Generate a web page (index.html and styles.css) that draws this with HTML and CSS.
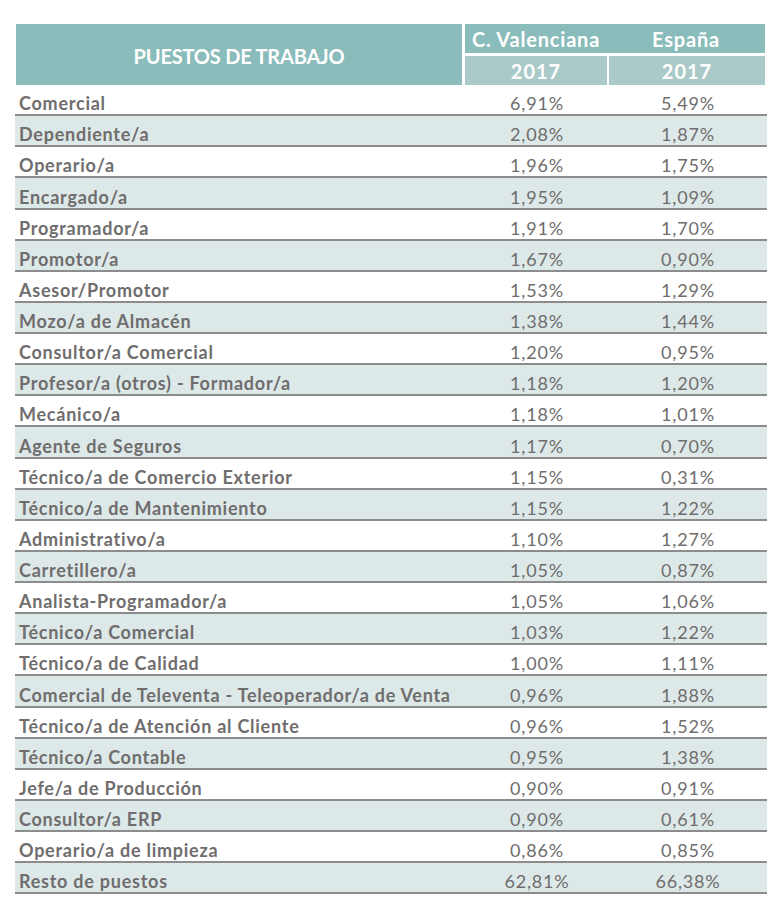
FILE: index.html
```html
<!DOCTYPE html>
<html lang="es">
<head>
<meta charset="utf-8">
<title>Puestos de trabajo</title>
<link rel="stylesheet" href="styles.css">
</head>
<body>
<div class="table">
  <div class="head">
    <div class="head-label">PUESTOS DE TRABAJO</div>
    <div class="head-right">
      <div class="head-top">
        <div class="col-a">C. Valenciana</div>
        <div class="col-b">España</div>
      </div>
      <div class="head-bottom">
        <div class="year col-a">2017</div>
        <div class="year col-b">2017</div>
      </div>
    </div>
  </div>
  <div class="rows">
    <div class="row"><span class="name">Comercial</span><span class="v a">6,91%</span><span class="v b">5,49%</span></div>
    <div class="row alt"><span class="name">Dependiente/a</span><span class="v a">2,08%</span><span class="v b">1,87%</span></div>
    <div class="row"><span class="name">Operario/a</span><span class="v a">1,96%</span><span class="v b">1,75%</span></div>
    <div class="row alt"><span class="name">Encargado/a</span><span class="v a">1,95%</span><span class="v b">1,09%</span></div>
    <div class="row"><span class="name">Programador/a</span><span class="v a">1,91%</span><span class="v b">1,70%</span></div>
    <div class="row alt"><span class="name">Promotor/a</span><span class="v a">1,67%</span><span class="v b">0,90%</span></div>
    <div class="row"><span class="name">Asesor/Promotor</span><span class="v a">1,53%</span><span class="v b">1,29%</span></div>
    <div class="row alt"><span class="name">Mozo/a de Almacén</span><span class="v a">1,38%</span><span class="v b">1,44%</span></div>
    <div class="row"><span class="name">Consultor/a Comercial</span><span class="v a">1,20%</span><span class="v b">0,95%</span></div>
    <div class="row alt"><span class="name">Profesor/a (otros) - Formador/a</span><span class="v a">1,18%</span><span class="v b">1,20%</span></div>
    <div class="row"><span class="name">Mecánico/a</span><span class="v a">1,18%</span><span class="v b">1,01%</span></div>
    <div class="row alt"><span class="name">Agente de Seguros</span><span class="v a">1,17%</span><span class="v b">0,70%</span></div>
    <div class="row"><span class="name">Técnico/a de Comercio Exterior</span><span class="v a">1,15%</span><span class="v b">0,31%</span></div>
    <div class="row alt"><span class="name">Técnico/a de Mantenimiento</span><span class="v a">1,15%</span><span class="v b">1,22%</span></div>
    <div class="row"><span class="name">Administrativo/a</span><span class="v a">1,10%</span><span class="v b">1,27%</span></div>
    <div class="row alt"><span class="name">Carretillero/a</span><span class="v a">1,05%</span><span class="v b">0,87%</span></div>
    <div class="row"><span class="name">Analista-Programador/a</span><span class="v a">1,05%</span><span class="v b">1,06%</span></div>
    <div class="row alt"><span class="name">Técnico/a Comercial</span><span class="v a">1,03%</span><span class="v b">1,22%</span></div>
    <div class="row"><span class="name">Técnico/a de Calidad</span><span class="v a">1,00%</span><span class="v b">1,11%</span></div>
    <div class="row alt"><span class="name">Comercial de Televenta - Teleoperador/a de Venta</span><span class="v a">0,96%</span><span class="v b">1,88%</span></div>
    <div class="row"><span class="name">Técnico/a de Atención al Cliente</span><span class="v a">0,96%</span><span class="v b">1,52%</span></div>
    <div class="row alt"><span class="name">Técnico/a Contable</span><span class="v a">0,95%</span><span class="v b">1,38%</span></div>
    <div class="row"><span class="name">Jefe/a de Producción</span><span class="v a">0,90%</span><span class="v b">0,91%</span></div>
    <div class="row alt"><span class="name">Consultor/a ERP</span><span class="v a">0,90%</span><span class="v b">0,61%</span></div>
    <div class="row"><span class="name">Operario/a de limpieza</span><span class="v a">0,86%</span><span class="v b">0,85%</span></div>
    <div class="row alt"><span class="name">Resto de puestos</span><span class="v a">62,81%</span><span class="v b">66,38%</span></div>
  </div>
</div>
</body>
</html>
```

FILE: styles.css
```css
html, body {
  margin: 0;
  padding: 0;
  background: #ffffff;
}

body {
  font-family: Lato, "Open Sans", "Liberation Sans", sans-serif;
  color: #6f6d6d;
}

.table {
  padding-top: 24px;
  padding-left: 15px;
  width: 752px;
}

.head {
  display: flex;
  margin-left: 1px;
  width: 749px;
  height: 61px;
  color: #ffffff;
  font-weight: 700;
}

.head-label {
  width: 446px;
  margin-right: 3px;
  background: #8abcbb;
  display: flex;
  align-items: center;
  justify-content: center;
  font-size: 20px;
  letter-spacing: -0.2px;
  padding-top: 2px;
  box-sizing: border-box;
}

.head-right {
  width: 300px;
  display: flex;
  flex-direction: column;
  gap: 3px;
}

.head-top {
  height: 29px;
  background: #8abcbb;
  display: flex;
  font-size: 20px;
  letter-spacing: 0.8px;
}

.head-bottom {
  height: 29px;
  display: flex;
  gap: 2px;
  font-size: 20px;
  letter-spacing: 1px;
}

.col-a {
  width: 142px;
  display: flex;
  align-items: center;
  justify-content: center;
}

.col-b {
  width: 156px;
  display: flex;
  align-items: center;
  justify-content: center;
}

.head-top .col-b {
  width: 158px;
}

.year {
  background: #a9cac8;
}

.rows {
  display: flex;
  flex-direction: column;
}

.row {
  display: flex;
  align-items: flex-end;
  height: 31.13px;
  box-sizing: border-box;
  border-bottom: 2px solid #8c8c8c;
  padding-bottom: 1px;
  font-size: 18px;
  line-height: 20px;
}

.row.alt {
  background: #dde8e8;
}

.name {
  width: 451px;
  padding-left: 4px;
  box-sizing: border-box;
  font-weight: 700;
  letter-spacing: 0.75px;
  white-space: nowrap;
}

.v {
  text-align: center;
  font-weight: 400;
  letter-spacing: 0.8px;
}

.v.a {
  width: 142px;
}

.v.b {
  width: 156px;
  margin-left: 2px;
}
```
